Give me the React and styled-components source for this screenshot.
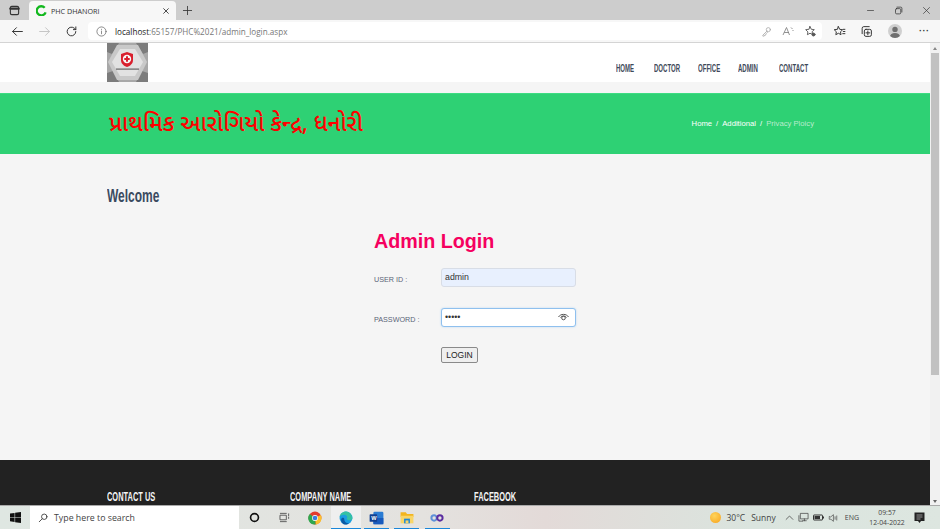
import React from "react";
import styled, { createGlobalStyle } from "styled-components";

const Global = createGlobalStyle`
  html, body { margin: 0; padding: 0; height: 529px; overflow: hidden; background: #f5f5f5; }
  * { box-sizing: border-box; }
  body { font-family: "Liberation Sans", Arial, sans-serif; }
`;
const Screen = styled.div`display:flex;flex-direction:column;width:940px;height:529px;overflow:hidden;`;
const TabStrip = styled.div`height:20px;background:#cdcdcd;display:flex;align-items:flex-end;flex:none;`;
const TabToggle = styled.div`width:29px;height:20px;display:flex;align-items:center;justify-content:center;`;
const Tab = styled.div`width:147px;height:19px;background:#f7f7f7;border-radius:4px 4px 0 0;display:flex;align-items:center;padding:0 6px 0 7px;font-size:7.2px;color:#333;font-family:"Open Sans",sans-serif;gap:4px;`;
const TabTitle = styled.span`flex:1;`;
const NewTab = styled.div`width:22px;height:20px;display:flex;align-items:center;justify-content:center;`;
const Spacer = styled.div`flex:1;`;
const WinButtons = styled.div`display:flex;align-items:center;height:20px;gap:19px;padding-right:9px;`;
const Toolbar = styled.div`height:23px;background:#f7f7f7;border-bottom:1px solid #d4d4d4;display:flex;align-items:center;flex:none;padding-left:10px;`;
const NavBtn = styled.div`width:14px;height:14px;margin-right:13px;display:flex;align-items:center;justify-content:center;`;
const Address = styled.div`margin-left:-3px;width:734px;height:18px;flex:none;background:#fff;border-radius:4px;display:flex;align-items:center;padding:0 6px 0 8px;font-size:8.15px;color:#777;font-family:"Open Sans",sans-serif;`;
const Host = styled.span`color:#222;`;
const AddressText = styled.span`margin-left:8px;flex:1;`;
const AddressIcons = styled.div`display:flex;gap:10px;align-items:center;`;
const ToolIcons = styled.div`display:flex;align-items:center;margin-left:11px;gap:14px;`;
const Avatar = styled.div`width:14px;height:14px;margin-left:1px;border-radius:50%;background:#cfcfcf;position:relative;overflow:hidden;display:flex;justify-content:center;`;
const Dots = styled.div`margin-left:3px;font-size:9px;color:#333;letter-spacing:.5px;font-weight:bold;line-height:9px;`;
const Viewport = styled.div`flex:1;display:flex;min-height:0;`;
const Page = styled.div`flex:1;display:flex;flex-direction:column;background:#f5f5f5;min-width:0;`;
const Scrollbar = styled.div`width:10px;flex:none;background:#f1f1f1;display:flex;flex-direction:column;align-items:center;padding-top:4px;`;
const ScrollThumb = styled.div`width:8px;height:322px;background:#c1c1c1;margin-top:3px;`;
const ScrollArrow = styled.div`margin-top:auto;margin-bottom:2px;width:0;height:0;border-left:2.5px solid transparent;border-right:2.5px solid transparent;border-top:3px solid #666;`;
const ArrowUp = styled.div`width:0;height:0;border-left:2.5px solid transparent;border-right:2.5px solid transparent;border-bottom:3px solid #888;`;
const Header = styled.header`height:39px;background:#fff;display:flex;align-items:flex-start;justify-content:space-between;padding:0 122px 0 107px;flex:none;`;
const Logo = styled.div`width:41px;height:39px;`;
const Nav = styled.nav`display:flex;gap:19px;margin-top:20px;`;
const NavLink = styled.a`display:block;width:${p=>p.$w}px;font-weight:bold;font-size:11px;line-height:11px;color:#3f4a5a;white-space:nowrap;transform:scaleX(.55);transform-origin:left center;`;
const Banner = styled.div`height:61px;margin-top:11px;background:#2ed174;display:flex;align-items:center;justify-content:space-between;padding:0 116px 0 107px;flex:none;border-top:1px solid #3ddc82;`;
const BannerTitle = styled.h1`margin:3px 0 0 2px;color:#ff0000;font-size:22.6px;font-weight:500;font-family:"Noto Sans Gujarati","Noto Sans",sans-serif;white-space:nowrap;`;
const Crumbs = styled.div`margin-bottom:1px;font-size:7.7px;color:#fff;display:flex;gap:4px;`;
const CrumbMuted = styled.span`color:#b9eccd;`;
const Main = styled.main`flex:1;padding:32px 0 0 107px;display:flex;flex-direction:column;min-height:0;`;
const Welcome = styled.h2`margin:0;height:20px;font-weight:bold;font-size:18px;line-height:20px;color:#3a4a60;white-space:nowrap;transform:scaleX(.665);transform-origin:left center;`;
const Form = styled.form`margin:23px 0 0 267px;width:210px;`;
const FormTitle = styled.div`color:#f5005f;font-weight:bold;font-size:19.7px;line-height:24px;`;
const Row = styled.div`display:grid;grid-template-columns:67px 135px;align-items:center;margin-top:${p=>p.$top}px;`;
const Label = styled.label`font-size:7.2px;color:#5a6478;padding-top:4px;`;
const Input = styled.div`height:19px;border-radius:3px;display:flex;align-items:center;justify-content:space-between;padding:0 6px 2px 3px;font-size:8.8px;color:#333;background:${p=>p.$focus?"#fff":"#e8f0fe"};border:1px solid ${p=>p.$focus?"#8fc0ee":"#d8dde6"};box-shadow:${p=>p.$focus?"0 0 2px #b5d6f3":"none"};`;
const LoginBtn = styled.button`display:block;margin:20px 0 0 67px;width:37px;height:16px;padding:0;font-family:"Liberation Sans",sans-serif;font-size:8.5px;color:#222;background:#efefef;border:1px solid #8a8a8a;border-radius:2px;`;
const Footer = styled.footer`height:45px;flex:none;background:#222;display:grid;grid-template-columns:183px 184px 1fr;padding:31px 0 0 107px;`;
const FootTitle = styled.div`font-weight:bold;font-size:12px;line-height:12px;color:#f4f4f4;white-space:nowrap;transform:scaleX(.62);transform-origin:left center;`;
const Taskbar = styled.div`height:24px;flex:none;display:flex;align-items:center;background:linear-gradient(90deg,#dfe7e2 0%,#e4e2df 45%,#e3dad8 58%,#dae4de 80%,#dde6e0 100%);border-top:1px solid #aaa;`;
const StartBtn = styled.div`width:30px;display:flex;justify-content:center;`;
const Search = styled.div`width:209px;height:23px;background:#fff;display:flex;align-items:center;padding-left:8px;gap:6px;font-size:8.8px;color:#444;font-family:"Open Sans",sans-serif;`;
const Pinned = styled.div`display:flex;align-items:center;height:23px;`;
const PinSlot = styled.div`width:30.5px;height:23px;display:flex;align-items:center;justify-content:center;background-color:${p=>p.$active?"#efefef":"transparent"};background-image:${p=>p.$run?"linear-gradient(#1a86d9,#1a86d9)":"none"};background-repeat:no-repeat;background-position:center bottom;background-size:${p=>p.$active?"30px":"25px"} 1.5px;`;
const Tray = styled.div`margin-left:auto;display:flex;align-items:center;font-family:"Open Sans",sans-serif;color:#444;font-size:8.5px;`;
const Sun = styled.div`width:11px;height:11px;border-radius:50%;background:radial-gradient(circle at 40% 35%,#ffd45a,#f7a21d);margin-right:5px;`;
const TrayText = styled.span`margin-right:${p=>p.$mr||0}px;font-size:${p=>p.$fs||8.5}px;`;
const TrayIcons = styled.div`display:flex;align-items:center;gap:4px;margin-right:7px;`;
const Clock = styled.div`text-align:center;font-size:6.8px;line-height:10px;width:38px;margin-right:8px;`;
const Notify = styled.div`margin-right:15px;display:flex;`;

const I = ({w=12,h=12,children,vb,...r}) => <svg width={w} height={h} viewBox={vb||"0 0 24 24"} fill="none" stroke="#444" strokeWidth="1.8" strokeLinecap="round" strokeLinejoin="round" {...r}>{children}</svg>;

const LogoArt = () => (
  <svg width="41" height="39" viewBox="0 0 41 39">
    <rect width="41" height="39" fill="#a8a8a8"/>
    <path d="M0 0H12L5 11 0 9ZM29 0H41V9L36 11ZM0 30l6-2 6 11H0ZM41 30l-6-2-6 11H41Z" fill="#7c7c7c"/>
    <path d="M10 2H31L40 19 31 37H10L1 19Z" fill="#c9c9c9"/>
    <path d="M13 6H28L36 19 28 33H13L5 19Z" fill="#e2e2e2"/>
    <path d="M14 11 20 9 26 11V17C26 20.5 23.5 22.8 20 24 16.5 22.8 14 20.5 14 17Z" fill="#d9202e"/>
    <circle cx="20" cy="16" r="4.2" fill="#f8f8f8"/>
    <path d="M19 13.3h2v1.7h1.7v2H21v1.7h-2V17h-1.7v-2H19Z" fill="#d9202e"/>
    <rect x="9" y="25.5" width="23" height="1.2" fill="#666"/>
  </svg>
);

const EdgeIcon = ({s=14}) => (
  <svg width={s} height={s} viewBox="0 0 24 24">
    <circle cx="12" cy="12" r="11" fill="#1b9de2"/>
    <path d="M23 13C23 7 18 1 12 1 6 1 2 5 1 10c3-4 11-5 13 0 .6 2-1 3-1 3 0 2 3 3 5 3 2 0 5-1 5-3Z" fill="#35c1a3"/>
    <path d="M9 14c0 4 3 7 8 7-3 3-9 3-12-1-2-3-2-6 0-8 1-1 4-1 4 2Z" fill="#0c59a4"/>
  </svg>
);

export default function App() {
  return (
    <Screen>
      <Global />
      <TabStrip>
        <TabToggle>
          <I w={11} h={11} strokeWidth="2.4" stroke="#333"><rect x="3" y="3" width="18" height="18" rx="3"/><path d="M3 8h18" strokeWidth="5"/></I>
        </TabToggle>
        <Tab>
          <svg width="11" height="11" viewBox="0 0 24 24" fill="none"><path d="M19 6a10 10 0 1 0 2 10" stroke="#12b81e" strokeWidth="5"/></svg>
          <TabTitle>PHC DHANORI</TabTitle>
          <I w={8} h={8} stroke="#333" strokeWidth="2.6"><path d="M5 5l14 14M19 5 5 19"/></I>
        </Tab>
        <NewTab><I w={11} h={11} stroke="#333" strokeWidth="1.8"><path d="M12 3v18M3 12h18"/></I></NewTab>
        <Spacer />
        <WinButtons>
          <I w={9} h={9} stroke="#333"><path d="M4 12h16"/></I>
          <I w={9} h={9} stroke="#333" strokeWidth="2"><rect x="4" y="7" width="14" height="14" rx="3"/><path d="M8 3h10a3 3 0 0 1 3 3v10"/></I>
          <I w={9} h={9} stroke="#333"><path d="M4 4l16 16M20 4 4 20"/></I>
        </WinButtons>
      </TabStrip>
      <Toolbar>
        <NavBtn><I w={13} h={13} stroke="#333"><path d="M21 12H3M10 5l-7 7 7 7"/></I></NavBtn>
        <NavBtn><I w={13} h={13} stroke="#c4c4c4"><path d="M3 12h18M14 5l7 7-7 7"/></I></NavBtn>
        <NavBtn><I w={13} h={13} stroke="#333"><path d="M20 12a8 8 0 1 1-2.5-5.8L20 8.5V3.5"/><path d="M20 8.5h-4.5"/></I></NavBtn>
        <Address>
          <I w={11} h={11} stroke="#666" strokeWidth="1.6"><circle cx="12" cy="12" r="10"/><path d="M12 11v6M12 7v.5"/></I>
          <AddressText><Host>localhost</Host>:65157/PHC%2021/admin_login.aspx</AddressText>
          <AddressIcons>
            <I w={11} h={11} stroke="#aaa"><circle cx="16" cy="8" r="4.5"/><path d="M13 11 4 20v2h3l1-2h2l1-3 3-3"/></I>
            <svg width="12" height="11" viewBox="0 0 24 22" fill="none" stroke="#777" strokeWidth="1.6"><path d="M2 18 9 3l6 15M4.5 13h9M18 3l3 3M21 8l2 2"/></svg>
            <I w={12} h={12} stroke="#555"><path d="M12 3l2.6 5.6 6 .7-4.4 4.1 1 5.6L12 16.5 6.8 19.4l1-5.6L3.4 9.3l6-.7Z"/><circle cx="19" cy="19" r="3" fill="#555"/></I>
          </AddressIcons>
        </Address>
        <ToolIcons>
          <I w={13} h={13} stroke="#333"><path d="M10 3l2.4 5 5.4.7-4 3.8 1 5.4L10 15.3l-4.8 2.6 1-5.4-4-3.8 5.4-.7ZM19 8h3M19 12h3M18 16h4"/></I>
          <I w={13} h={13} stroke="#333"><rect x="8" y="8" width="13" height="13" rx="3"/><path d="M4 16V6a3 3 0 0 1 3-3h10M14.5 11v7M11 14.5h7"/></I>
          <Avatar><svg width="14" height="14" viewBox="0 0 14 14"><circle cx="7" cy="5.4" r="2.7" fill="#6f6f6f"/><ellipse cx="7" cy="12.5" rx="5" ry="3.6" fill="#6f6f6f"/></svg></Avatar>
          <Dots>···</Dots>
        </ToolIcons>
      </Toolbar>
      <Viewport>
        <Page>
          <Header>
            <Logo><LogoArt /></Logo>
            <Nav>
              <NavLink $w={19}>HOME</NavLink>
              <NavLink $w={25}>DOCTOR</NavLink>
              <NavLink $w={21}>OFFICE</NavLink>
              <NavLink $w={22}>ADMIN</NavLink>
              <NavLink $w={29}>CONTACT</NavLink>
            </Nav>
          </Header>
          <Banner>
            <BannerTitle>પ્રાથમિક આરોગિયો કેન્દ્ર, ધનોરી</BannerTitle>
            <Crumbs><span>Home</span><span>/</span><span>Additional</span><span>/</span><CrumbMuted>Privacy Ploicy</CrumbMuted></Crumbs>
          </Banner>
          <Main>
            <Welcome>Welcome</Welcome>
            <Form>
              <FormTitle>Admin Login</FormTitle>
              <Row $top={15}><Label>USER ID :</Label><Input>admin</Input></Row>
              <Row $top={21}><Label>PASSWORD :</Label><Input $focus>•••••
                <svg width="11" height="9" viewBox="0 0 22 18" fill="none" stroke="#555" strokeWidth="2"><path d="M1 10C5 3 17 3 21 10"/><path d="M5 11c3-4 9-4 12 0"/><circle cx="11" cy="12" r="3.6"/></svg>
              </Input></Row>
              <LoginBtn type="button">LOGIN</LoginBtn>
            </Form>
          </Main>
          <Footer>
            <FootTitle>CONTACT US</FootTitle>
            <FootTitle>COMPANY NAME</FootTitle>
            <FootTitle>FACEBOOK</FootTitle>
          </Footer>
        </Page>
        <Scrollbar><ArrowUp /><ScrollThumb /><ScrollArrow /></Scrollbar>
      </Viewport>
      <Taskbar>
        <StartBtn><svg width="11" height="11" viewBox="0 0 12 12" fill="#111"><path d="M0 1.7 5 1v4.6H0ZM5.6.9 12 0v5.6H5.6ZM0 6.2h5v4.7L0 10.2ZM5.6 6.2H12V12L5.6 11.1Z"/></svg></StartBtn>
        <Search>
          <I w={10} h={10} stroke="#333" strokeWidth="2"><circle cx="15" cy="9" r="6.5"/><path d="M10 14 3 21"/></I>
          Type here to search
        </Search>
        <Pinned>
          <PinSlot><svg width="11" height="11" viewBox="0 0 12 12" fill="none" stroke="#111" strokeWidth="1.8"><circle cx="6" cy="6" r="4.3"/></svg></PinSlot>
          <PinSlot><I w={11} h={11} stroke="#555" strokeWidth="2"><rect x="3" y="7" width="13" height="10"/><path d="M3 3h13M3 21h13M21 4v4M21 11v3"/></I></PinSlot>
          <PinSlot><svg width="14" height="14" viewBox="0 0 24 24"><circle cx="12" cy="12" r="11" fill="#e33b2e"/><path d="M12 12 22 7a11 11 0 0 1-9 16Z" fill="#fbc02d"/><path d="M12 12 13 23A11 11 0 0 1 3 5Z" fill="#2fa84f"/><circle cx="12" cy="12" r="5" fill="#fff"/><circle cx="12" cy="12" r="4" fill="#3a7de0"/></svg></PinSlot>
          <PinSlot $active $run><EdgeIcon /></PinSlot>
          <PinSlot $run><svg width="15" height="14" viewBox="0 0 24 22"><rect x="7" y="1" width="16" height="20" rx="2" fill="#2b7cd3"/><rect x="7" y="11" width="16" height="10" fill="#185abd"/><rect x="1" y="5" width="12" height="12" rx="1" fill="#103f91"/><text x="3.5" y="14.5" fontSize="9" fill="#fff" fontFamily="Liberation Sans" fontWeight="bold">W</text></svg></PinSlot>
          <PinSlot $run><svg width="14" height="13" viewBox="0 0 24 22"><path d="M1 2h9l2 3h11v5H1Z" fill="#f2b51f"/><path d="M1 8h22v13H1Z" fill="#f8d568"/><rect x="7" y="13" width="10" height="8" fill="#1e88d8"/><rect x="9.5" y="16" width="5" height="5" fill="#f8d568"/></svg></PinSlot>
          <PinSlot $run><svg width="14" height="10" viewBox="0 0 24 16" fill="none" strokeWidth="3.4"><circle cx="7" cy="8" r="4.6" stroke="#5d8fd8"/><circle cx="17" cy="8" r="4.6" stroke="#5a2ca0"/></svg></PinSlot>
        </Pinned>
        <Tray>
          <Sun />
          <TrayText $mr={6}>30°C</TrayText>
          <TrayText $mr={9}>Sunny</TrayText>
          <TrayIcons>
            <I w={9} h={9} stroke="#333"><path d="M3 17 12 8l9 9"/></I>
            <I w={11} h={11} stroke="#444" strokeWidth="1.6"><rect x="6" y="3" width="16" height="12"/><path d="M2 8v12h8M14 15v4M10 19h8"/></I>
            <svg width="11" height="7" viewBox="0 0 22 14"><rect x="1" y="2" width="18" height="10" rx="1" fill="none" stroke="#333" strokeWidth="2"/><rect x="3" y="4" width="11" height="6" fill="#333"/><rect x="20" y="5" width="2" height="4" fill="#333"/></svg>
            <I w={10} h={10} stroke="#444" strokeWidth="1.6"><path d="M3 9v6h4l6 5V4L7 9ZM17 9v6M21 7v10"/></I>
          </TrayIcons>
          <TrayText $mr={9} $fs={7}>ENG</TrayText>
          <Clock>09:57<br />12-04-2022</Clock>
          <Notify><svg width="11" height="12" viewBox="0 0 22 24"><path d="M1 1h20v17h-7l-3 4-3-4H1Z" fill="#222"/><path d="M5 6h12M5 10h12M5 14h8" stroke="#bbb" strokeWidth="1.5"/></svg></Notify>
        </Tray>
      </Taskbar>
    </Screen>
  );
}
